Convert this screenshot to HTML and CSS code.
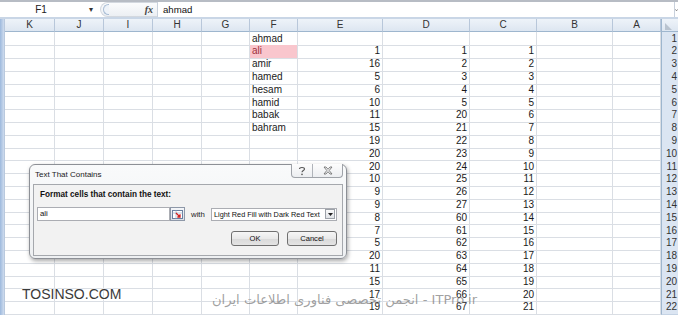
FILE: index.html
```html
<!DOCTYPE html>
<html>
<head>
<meta charset="utf-8">
<link rel="stylesheet" href="styles.css">
</head>
<body>
<div class="app">
  <div class="fbar">
    <div class="namebox"><span class="nb-text">F1</span><span class="nb-arrow">&#9662;</span></div>
    <div class="fxarea"><span class="grip"></span><span class="fx">fx</span></div>
    <div class="finput">ahmad</div>
    <div class="fexpand"><svg width="4" height="4" viewBox="0 0 4 4"><path d="M0 1 L2 3 L4 1" fill="none" stroke="#555" stroke-width="1"/></svg></div>
  </div>
  <div class="sheet">
    <div class="row head"><i class="strip"></i><div class="ch">K</div><div class="ch">J</div><div class="ch">I</div><div class="ch">H</div><div class="ch">G</div><div class="ch">F</div><div class="ch">E</div><div class="ch">D</div><div class="ch">C</div><div class="ch">B</div><div class="ch">A</div><div class="corner"><svg width="9" height="9" viewBox="0 0 9 9"><path d="M1 1 L1 8 L8 8 Z" fill="#b9c3cf"/></svg></div></div>
    <div class="row"><i class="strip"></i><div class="c"></div><div class="c"></div><div class="c"></div><div class="c"></div><div class="c"></div><div class="c t">ahmad</div><div class="c n"></div><div class="c n"></div><div class="c n"></div><div class="c"></div><div class="c"></div><div class="rh">1</div></div>
    <div class="row"><i class="strip"></i><div class="c"></div><div class="c"></div><div class="c"></div><div class="c"></div><div class="c"></div><div class="c t hl">ali</div><div class="c n">1</div><div class="c n">1</div><div class="c n">1</div><div class="c"></div><div class="c"></div><div class="rh">2</div></div>
    <div class="row"><i class="strip"></i><div class="c"></div><div class="c"></div><div class="c"></div><div class="c"></div><div class="c"></div><div class="c t">amir</div><div class="c n">16</div><div class="c n">2</div><div class="c n">2</div><div class="c"></div><div class="c"></div><div class="rh">3</div></div>
    <div class="row"><i class="strip"></i><div class="c"></div><div class="c"></div><div class="c"></div><div class="c"></div><div class="c"></div><div class="c t">hamed</div><div class="c n">5</div><div class="c n">3</div><div class="c n">3</div><div class="c"></div><div class="c"></div><div class="rh">4</div></div>
    <div class="row"><i class="strip"></i><div class="c"></div><div class="c"></div><div class="c"></div><div class="c"></div><div class="c"></div><div class="c t">hesam</div><div class="c n">6</div><div class="c n">4</div><div class="c n">4</div><div class="c"></div><div class="c"></div><div class="rh">5</div></div>
    <div class="row"><i class="strip"></i><div class="c"></div><div class="c"></div><div class="c"></div><div class="c"></div><div class="c"></div><div class="c t">hamid</div><div class="c n">10</div><div class="c n">5</div><div class="c n">5</div><div class="c"></div><div class="c"></div><div class="rh">6</div></div>
    <div class="row"><i class="strip"></i><div class="c"></div><div class="c"></div><div class="c"></div><div class="c"></div><div class="c"></div><div class="c t">babak</div><div class="c n">11</div><div class="c n">20</div><div class="c n">6</div><div class="c"></div><div class="c"></div><div class="rh">7</div></div>
    <div class="row"><i class="strip"></i><div class="c"></div><div class="c"></div><div class="c"></div><div class="c"></div><div class="c"></div><div class="c t">bahram</div><div class="c n">15</div><div class="c n">21</div><div class="c n">7</div><div class="c"></div><div class="c"></div><div class="rh">8</div></div>
    <div class="row"><i class="strip"></i><div class="c"></div><div class="c"></div><div class="c"></div><div class="c"></div><div class="c"></div><div class="c t"></div><div class="c n">19</div><div class="c n">22</div><div class="c n">8</div><div class="c"></div><div class="c"></div><div class="rh">9</div></div>
    <div class="row"><i class="strip"></i><div class="c"></div><div class="c"></div><div class="c"></div><div class="c"></div><div class="c"></div><div class="c t"></div><div class="c n">20</div><div class="c n">23</div><div class="c n">9</div><div class="c"></div><div class="c"></div><div class="rh">10</div></div>
    <div class="row"><i class="strip"></i><div class="c"></div><div class="c"></div><div class="c"></div><div class="c"></div><div class="c"></div><div class="c t"></div><div class="c n">20</div><div class="c n">24</div><div class="c n">10</div><div class="c"></div><div class="c"></div><div class="rh">11</div></div>
    <div class="row"><i class="strip"></i><div class="c"></div><div class="c"></div><div class="c"></div><div class="c"></div><div class="c"></div><div class="c t"></div><div class="c n">10</div><div class="c n">25</div><div class="c n">11</div><div class="c"></div><div class="c"></div><div class="rh">12</div></div>
    <div class="row"><i class="strip"></i><div class="c"></div><div class="c"></div><div class="c"></div><div class="c"></div><div class="c"></div><div class="c t"></div><div class="c n">9</div><div class="c n">26</div><div class="c n">12</div><div class="c"></div><div class="c"></div><div class="rh">13</div></div>
    <div class="row"><i class="strip"></i><div class="c"></div><div class="c"></div><div class="c"></div><div class="c"></div><div class="c"></div><div class="c t"></div><div class="c n">9</div><div class="c n">27</div><div class="c n">13</div><div class="c"></div><div class="c"></div><div class="rh">14</div></div>
    <div class="row"><i class="strip"></i><div class="c"></div><div class="c"></div><div class="c"></div><div class="c"></div><div class="c"></div><div class="c t"></div><div class="c n">8</div><div class="c n">60</div><div class="c n">14</div><div class="c"></div><div class="c"></div><div class="rh">15</div></div>
    <div class="row"><i class="strip"></i><div class="c"></div><div class="c"></div><div class="c"></div><div class="c"></div><div class="c"></div><div class="c t"></div><div class="c n">7</div><div class="c n">61</div><div class="c n">15</div><div class="c"></div><div class="c"></div><div class="rh">16</div></div>
    <div class="row"><i class="strip"></i><div class="c"></div><div class="c"></div><div class="c"></div><div class="c"></div><div class="c"></div><div class="c t"></div><div class="c n">5</div><div class="c n">62</div><div class="c n">16</div><div class="c"></div><div class="c"></div><div class="rh">17</div></div>
    <div class="row"><i class="strip"></i><div class="c"></div><div class="c"></div><div class="c"></div><div class="c"></div><div class="c"></div><div class="c t"></div><div class="c n">20</div><div class="c n">63</div><div class="c n">17</div><div class="c"></div><div class="c"></div><div class="rh">18</div></div>
    <div class="row"><i class="strip"></i><div class="c"></div><div class="c"></div><div class="c"></div><div class="c"></div><div class="c"></div><div class="c t"></div><div class="c n">11</div><div class="c n">64</div><div class="c n">18</div><div class="c"></div><div class="c"></div><div class="rh">19</div></div>
    <div class="row"><i class="strip"></i><div class="c"></div><div class="c"></div><div class="c"></div><div class="c"></div><div class="c"></div><div class="c t"></div><div class="c n">15</div><div class="c n">65</div><div class="c n">19</div><div class="c"></div><div class="c"></div><div class="rh">20</div></div>
    <div class="row"><i class="strip"></i><div class="c"></div><div class="c"></div><div class="c"></div><div class="c"></div><div class="c"></div><div class="c t"></div><div class="c n">17</div><div class="c n">66</div><div class="c n">20</div><div class="c"></div><div class="c"></div><div class="rh">21</div></div>
    <div class="row"><i class="strip"></i><div class="c"></div><div class="c"></div><div class="c"></div><div class="c"></div><div class="c"></div><div class="c t"></div><div class="c n">19</div><div class="c n">67</div><div class="c n">21</div><div class="c"></div><div class="c"></div><div class="rh">22</div></div>
  </div>

  <div class="dialog">
    <div class="dtitle">Text That Contains</div>
    <div class="tbtns">
      <div class="tb help"><svg width="8" height="10" viewBox="0 0 8 10"><path d="M1.5 3 C1.5 1 6.5 1 6.5 3 C6.5 4.5 4 4.5 4 6.3" fill="none" stroke="#555" stroke-width="1.1"/><circle cx="4" cy="8.4" r="0.8" fill="#555"/></svg></div>
      <div class="tb close"><svg width="10" height="9" viewBox="0 0 10 9"><path d="M1 1 L3 1 L5 3.3 L7 1 L9 1 L6.2 4.5 L9 8 L7 8 L5 5.7 L3 8 L1 8 L3.8 4.5 Z" fill="none" stroke="#666" stroke-width="0.8"/></svg></div>
    </div>
    <div class="dpanel">
      <div class="dlabel">Format cells that contain the text:</div>
      <div class="drow">
        <div class="dinput">ali</div>
        <div class="refbtn"><svg width="11" height="9" viewBox="0 0 11 9"><rect x="0.5" y="0.5" width="10" height="8" fill="#fff" stroke="#6a7fa0"/><path d="M0.5 3 H10.5 M4 0.5 V8.5" stroke="#a9b7cc" stroke-width="0.8"/><path d="M4 3 L8 7 M8 4.3 V7 H5.3" fill="none" stroke="#d02020" stroke-width="1.3"/></svg></div>
        <span class="dwith">with</span>
        <div class="dselect"><span class="dsel-text">Light Red Fill with Dark Red Text</span><span class="dsel-btn"><svg width="5" height="3" viewBox="0 0 5 3"><path d="M0 0 H5 L2.5 3 Z" fill="#222"/></svg></span></div>
      </div>
      <div class="dbuttons">
        <div class="btn ok">OK</div>
        <div class="btn cancel">Cancel</div>
      </div>
    </div>
  </div>

  <div class="wm-left">TOSINSO.COM</div>
  <div class="wm-right">انجمن تخصصی فناوری اطلاعات ایران - ITPro.ir</div>
</div>
</body>
</html>
```

FILE: styles.css
```css
* { box-sizing: border-box; }
html, body { margin: 0; padding: 0; }
body {
  width: 678px;
  height: 315px;
  overflow: hidden;
  background: #fff;
  font-family: "Liberation Sans", Arial, sans-serif;
}
.app { position: relative; width: 678px; height: 315px; overflow: hidden; }

/* formula bar */
.fbar {
  height: 19px;
  display: flex;
  border-top: 2px solid #b7bcc4;
  border-bottom: 2px solid #c9d6e6;
  background: #fff;
}
.namebox {
  width: 100px;
  display: flex;
  align-items: center;
  font-size: 10px;
  color: #222;
}
.nb-text { width: 82px; text-align: center; }
.nb-arrow { font-size: 8px; color: #333; margin-left: 7px; }
.fxarea {
  width: 57px;
  display: flex;
  align-items: center;
  justify-content: space-between;
  background: linear-gradient(#fbfcfd, #eceff3);
  border: 1px solid #d3d8df;
  border-right: none;
  border-radius: 8px 0 0 8px;
  padding: 0 4px 0 2px;
}
.grip {
  width: 6px;
  height: 11px;
  border: 1px solid #a9bdd5;
  border-right: none;
  border-radius: 6px 0 0 6px;
  background: #eef3f9;
}
.fx {
  font-family: "Liberation Serif", serif;
  font-style: italic;
  font-weight: bold;
  font-size: 10px;
  color: #444;
}
.finput {
  flex: 1;
  border-left: 1px solid #c9d1dc;
  font-size: 9.6px;
  line-height: 15px;
  padding-left: 5px;
  color: #111;
}
.fexpand {
  width: 4px;
  display: flex;
  align-items: center;
  border-left: 1px solid #c9d1dc;
}

/* sheet */
.row {
  display: grid;
  grid-template-columns: 5px 50px 49px 49px 49px 48px 48px 85px 87px 67px 76px 48px 17px;
  height: 12.8px;
}
.row.head { height: 13px; }
.strip {
  display: block;
  background: linear-gradient(90deg, #9db9dd, #cfdcee);
  border-right: 1px solid #b9c9de;
}
.ch {
  background: linear-gradient(#eef3f9, #dde6f1);
  border-right: 1px solid #b8c7da;
  border-bottom: 1px solid #9eb6ce;
  font-size: 10px;
  line-height: 12px;
  text-align: center;
  color: #333;
}
.corner {
  background: linear-gradient(#eef3f9, #dde6f1);
  border-bottom: 1px solid #9eb6ce;
  border-left: 1px solid #9eb6ce;
  display: flex;
  align-items: flex-end;
  padding-left: 2px;
}
.c {
  border-right: 1px solid #dadee4;
  border-bottom: 1px solid #dadee4;
  font-size: 10px;
  line-height: 12.6px;
  padding-top: 0.6px;
  color: #1a1a1a;
  white-space: nowrap;
  overflow: hidden;
}
.t { padding-left: 2px; }
.n { text-align: right; padding-right: 2px; }
.hl { background: #f9c6cd; color: #a0303c; }
.rh {
  background: #dbe5f2;
  border-left: 1px solid #9eb6ce;
  border-bottom: 1px solid #c5d3e4;
  font-size: 10px;
  line-height: 12.6px;
  padding-top: 0.6px;
  text-align: right;
  padding-right: 1px;
  color: #333;
}

/* dialog */
.dialog {
  position: absolute;
  left: 29px;
  top: 164px;
  width: 318px;
  height: 95px;
  background: linear-gradient(#f9fafb, #eef0f2);
  border: 1px solid #8d9096;
  border-radius: 6px;
  box-shadow: 1px 2px 4px rgba(0, 0, 0, 0.35);
}
.dtitle {
  position: absolute;
  left: 5px;
  top: 5px;
  font-size: 8px;
  color: #222;
}
.tbtns {
  position: absolute;
  left: 261px;
  top: -1px;
  width: 52px;
  height: 14px;
  display: flex;
  border: 1px solid #9fa3a9;
  border-top: none;
  border-radius: 0 0 4px 4px;
  background: linear-gradient(#fdfdfd, #eceef1);
}
.tb { display: flex; align-items: center; justify-content: center; }
.help { width: 21px; border-right: 1px solid #b0b4ba; }
.close { flex: 1; }
.dpanel {
  position: absolute;
  left: 3px;
  top: 19px;
  width: 310px;
  height: 72px;
  border: 1px solid #a5a8ad;
  background: #f2f2f2;
  padding: 5px 5px 0 3px;
}
.dlabel {
  font-size: 8.2px;
  font-weight: bold;
  color: #111;
  padding-left: 3px;
  height: 17px;
  line-height: 10px;
}
.drow {
  display: flex;
  align-items: center;
  height: 14px;
}
.dinput {
  width: 133px;
  height: 14px;
  border: 1px solid #abadb3;
  background: #fff;
  font-size: 7.8px;
  line-height: 12px;
  padding-left: 2px;
  color: #111;
}
.refbtn {
  width: 15px;
  height: 14px;
  border: 1px solid #8e98a8;
  background: linear-gradient(#f4f6f9, #d9dee6);
  display: flex;
  align-items: center;
  justify-content: center;
}
.dwith {
  font-size: 7.8px;
  color: #222;
  margin-left: 6px;
  width: 20px;
}
.dselect {
  width: 126px;
  height: 13px;
  border: 1px solid #abadb3;
  background: #fff;
  display: flex;
  align-items: center;
  padding: 0 1px 0 2px;
  margin-left: auto;
}
.dsel-text { flex: 1; font-size: 7.3px; color: #111; white-space: nowrap; }
.dsel-btn {
  width: 10px;
  height: 10px;
  border: 1px solid #9da2a9;
  background: linear-gradient(#fafafa, #e0e3e7);
  display: flex;
  align-items: center;
  justify-content: center;
}
.dbuttons {
  display: flex;
  justify-content: flex-end;
  gap: 8px;
  margin-top: 10px;
}
.btn {
  height: 15px;
  border: 1px solid #707070;
  border-radius: 3px;
  background: linear-gradient(#f6f6f6 0%, #e9e9e9 50%, #d9d9d9 51%, #e4e4e4 100%);
  font-size: 7.6px;
  line-height: 13px;
  text-align: center;
  color: #111;
}
.ok { width: 48px; }
.cancel { width: 50px; }

/* watermarks */
.wm-left {
  position: absolute;
  left: 22px;
  top: 286px;
  font-size: 14px;
  line-height: 16px;
  color: #3a3a3a;
  text-shadow: 0 0 2px #fff, 0 0 2px #fff, 0 0 1px #fff;
}
.wm-right {
  position: absolute;
  left: 212px;
  top: 292px;
  font-family: "DejaVu Sans", "Liberation Sans", sans-serif;
  font-size: 13.1px;
  line-height: 16px;
  color: rgba(120, 120, 120, 0.7);
  white-space: nowrap;
}
```
